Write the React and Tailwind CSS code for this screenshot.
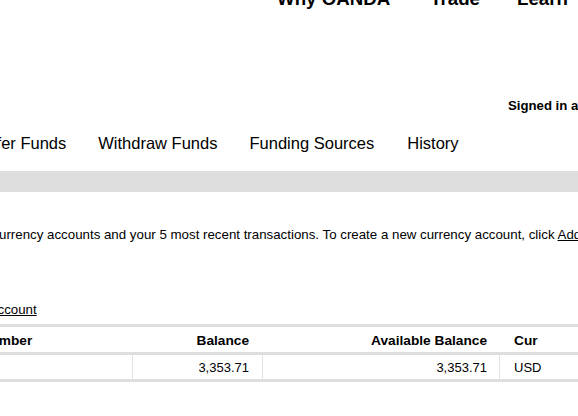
export default function App() {
  return (
    <div
      className="relative w-[578px] h-[416px] overflow-hidden bg-white text-black"
      style={{ fontFamily: '"Liberation Sans", Arial, sans-serif' }}
    >
      {/* top navigation */}
      <div className="-mt-[11px] flex whitespace-nowrap text-[18.7px] font-bold leading-[20px]">
        <span className="ml-[277px]">Why OANDA</span>
        <span className="ml-[40px]">Trade</span>
        <span className="ml-[37px]">Learn</span>
        <span className="ml-[37px]">About</span>
      </div>

      {/* signed in */}
      <div className="mt-[89px] ml-[508px] whitespace-nowrap text-[13.2px] font-bold leading-[16px]">
        Signed in as: demo_user
      </div>

      {/* tabs */}
      <div className="mt-[19px] flex whitespace-nowrap text-[16.5px] leading-[20px]">
        <span className="-ml-[61px] px-4">Transfer Funds</span>
        <span className="px-4">Withdraw Funds</span>
        <span className="px-4">Funding Sources</span>
        <span className="ml-[1px] px-4">History</span>
      </div>

      {/* gray bar */}
      <div className="mt-[18px] h-[21px] bg-[#dedede]" />

      {/* description */}
      <p className="mt-[35px] -ml-[100px] whitespace-nowrap text-[13.3px] leading-[16px]">
        Below are your currency accounts and your 5 most recent transactions. To create a new
        currency account, click <a className="underline">Add Account</a>.
      </p>

      {/* link */}
      <div className="mt-[59px] -ml-[38px] whitespace-nowrap text-[13.3px] leading-[16px]">
        <a className="underline">Add Account</a>
      </div>

      {/* table */}
      <div className="mt-[6px] border-t-[3px] border-[#dedede] w-[700px]">
        <div className="flex h-[28px] border-b-[3px] border-[#dedede] pt-[6px] text-[13.7px] font-bold leading-[16px] whitespace-nowrap">
          <div className="w-[132px]">
            <span className="-ml-[78px] inline-block">Account Number</span>
          </div>
          <div className="w-[130px] border-l border-transparent pr-[13px] text-right">Balance</div>
          <div className="w-[237px] border-l border-transparent pr-[12px] text-right">Available Balance</div>
          <div className="border-l border-transparent pl-[14px]">Cur</div>
        </div>
        <div className="flex h-[27px] border-b-[3px] border-[#dedede] text-[13px] leading-[16px] whitespace-nowrap">
          <div className="w-[132px]" />
          <div className="w-[130px] border-l border-[#e2e2e2] pt-[5px] pr-[13px] text-right">3,353.71</div>
          <div className="w-[237px] border-l border-[#e2e2e2] pt-[5px] pr-[12px] text-right">3,353.71</div>
          <div className="border-l border-[#e2e2e2] pt-[5px] pl-[14px]">USD</div>
        </div>
      </div>
    </div>
  );
}
